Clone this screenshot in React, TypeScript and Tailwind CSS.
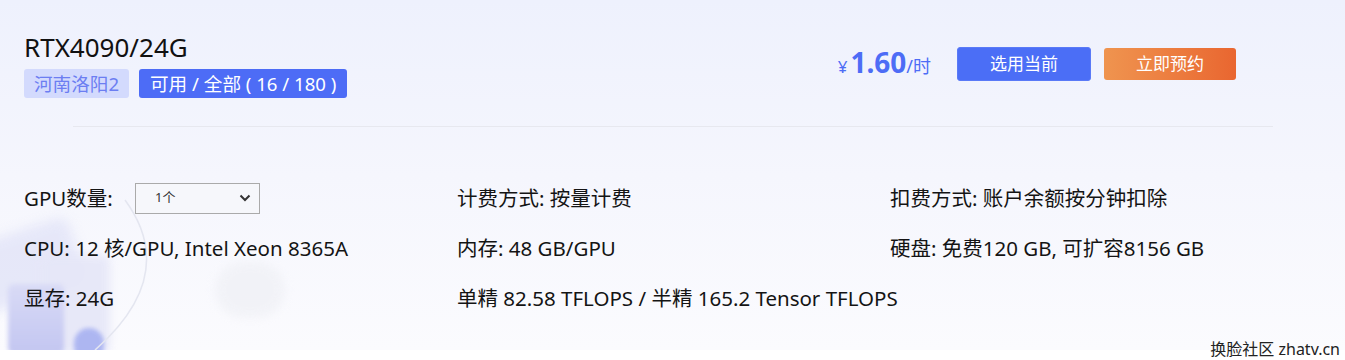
import React, { useState } from 'react';

const font = { fontFamily: '"Noto Sans", "Noto Sans CJK SC", sans-serif' };

function Tag({ children, solid }: { children: React.ReactNode; solid?: boolean }) {
  return (
    <span
      className={
        solid
          ? 'inline-flex items-center h-[29px] px-[11px] rounded-[3px] bg-[#4d6cf6] text-white text-[18.6px] whitespace-nowrap'
          : 'inline-flex items-center h-[29px] px-[10px] rounded-[3px] bg-[#d3dafd] text-[#6c7ef2] text-[18.6px] whitespace-nowrap'
      }
    >
      {children}
    </span>
  );
}

function Spec({ children }: { children: React.ReactNode }) {
  return <div className="h-[32px] flex items-center text-[20.5px] text-[#141414] whitespace-nowrap">{children}</div>;
}

export default function App() {
  const [count, setCount] = useState('1');

  return (
    <div className="w-[1345px] h-[360px] bg-white relative overflow-hidden" style={font}>
      <div className="relative h-[350px] bg-gradient-to-b from-[#eef1fd] via-[#f5f6fd] to-[#fbfbfe] overflow-hidden">
        {/* decorative background shapes */}
        <div className="absolute left-[-40px] top-[232px] w-[120px] h-[70px] rounded-[12px] bg-[#e2e4f8] opacity-80 blur-[6px] rotate-[-18deg]" />
        <div className="absolute left-[40px] top-[255px] w-[70px] h-[100px] rounded-[8px] bg-[#e6e7f8] opacity-90 blur-[4px]" />
        <div className="absolute left-[8px] top-[284px] w-[56px] h-[70px] rounded-[6px] bg-gradient-to-b from-[#d9dbf6] to-[#c3c6f1] blur-[2px]" />
        <div className="absolute left-[74px] top-[328px] w-[30px] h-[34px] rounded-full bg-[#a7b1f1] opacity-90 blur-[2px]" />
        <svg className="absolute left-0 top-0" width="300" height="350" viewBox="0 0 300 350">
          <path d="M125 200 Q180 275 95 350" fill="none" stroke="#e4e6f0" strokeWidth="1.5" />
        </svg>
        <div className="absolute left-[215px] top-[262px] w-[70px] h-[56px] rounded-full bg-[#eff0f5] blur-[5px] opacity-70" />

        <div className="relative">
          <div className="flex items-start justify-between pl-[24px] pr-[109px] pt-[31px]">
            <div>
              <h1 className="text-[26px] leading-[32px] text-[#111] font-normal m-0">RTX4090/24G</h1>
              <div className="flex gap-[10px] mt-[6px]">
                <Tag>河南洛阳2</Tag>
                <Tag solid>可用 / 全部 ( 16 / 180 )</Tag>
              </div>
            </div>
            <div className="flex items-center mt-[16px]">
              <div className="flex items-baseline text-[#4d6cf6] mr-[26px]">
                <span className="text-[17px] mr-[3px]">¥</span>
                <span className="text-[28px] font-bold leading-none">1.60</span>
                <span className="text-[18px]">/时</span>
              </div>
              <button className="w-[134px] h-[34px] rounded-[3px] bg-[#4b6ef6] border border-[#5a7af7] text-white text-[17px]">
                选用当前
              </button>
              <button className="ml-[13px] w-[132px] h-[32px] rounded-[3px] bg-gradient-to-r from-[#ef944f] to-[#e96630] text-white text-[17px]">
                立即预约
              </button>
            </div>
          </div>

          <div className="ml-[73px] mr-[72px] mt-[28px] h-px bg-[#e7e8ef]" />

          <div className="grid grid-cols-[433px_433px_1fr] pl-[24px] mt-[55px] gap-y-[18px]">
            <Spec>
              <span className="w-[111px]">GPU数量:</span>
              <select
                value={count}
                onChange={(e) => setCount(e.target.value)}
                className="w-[125px] h-[31px] border border-[#aaaaaa] bg-[#f6f7fb] text-[13px] text-[#333] pl-[19px] appearance-none"
              >
                <option value="1">1个</option>
                <option value="2">2个</option>
                <option value="4">4个</option>
                <option value="8">8个</option>
              </select>
              <svg className="-ml-[21px] pointer-events-none" width="12" height="8" viewBox="0 0 12 8">
                <path d="M1.5 1.5 L6 6 L10.5 1.5" fill="none" stroke="#333" strokeWidth="2" />
              </svg>
            </Spec>
            <Spec>计费方式: 按量计费</Spec>
            <Spec>扣费方式: 账户余额按分钟扣除</Spec>
            <Spec>CPU: 12 核/GPU, Intel Xeon 8365A</Spec>
            <Spec>内存: 48 GB/GPU</Spec>
            <Spec>硬盘: 免费120 GB, 可扩容8156 GB</Spec>
            <Spec>显存: 24G</Spec>
            <Spec>单精 82.58 TFLOPS / 半精 165.2 Tensor TFLOPS</Spec>
            <div />
          </div>
        </div>
      </div>
      <div className="absolute right-[5px] bottom-[2px] text-[16px] leading-[18px] text-[#222]">换脸社区 zhatv.cn</div>
    </div>
  );
}
